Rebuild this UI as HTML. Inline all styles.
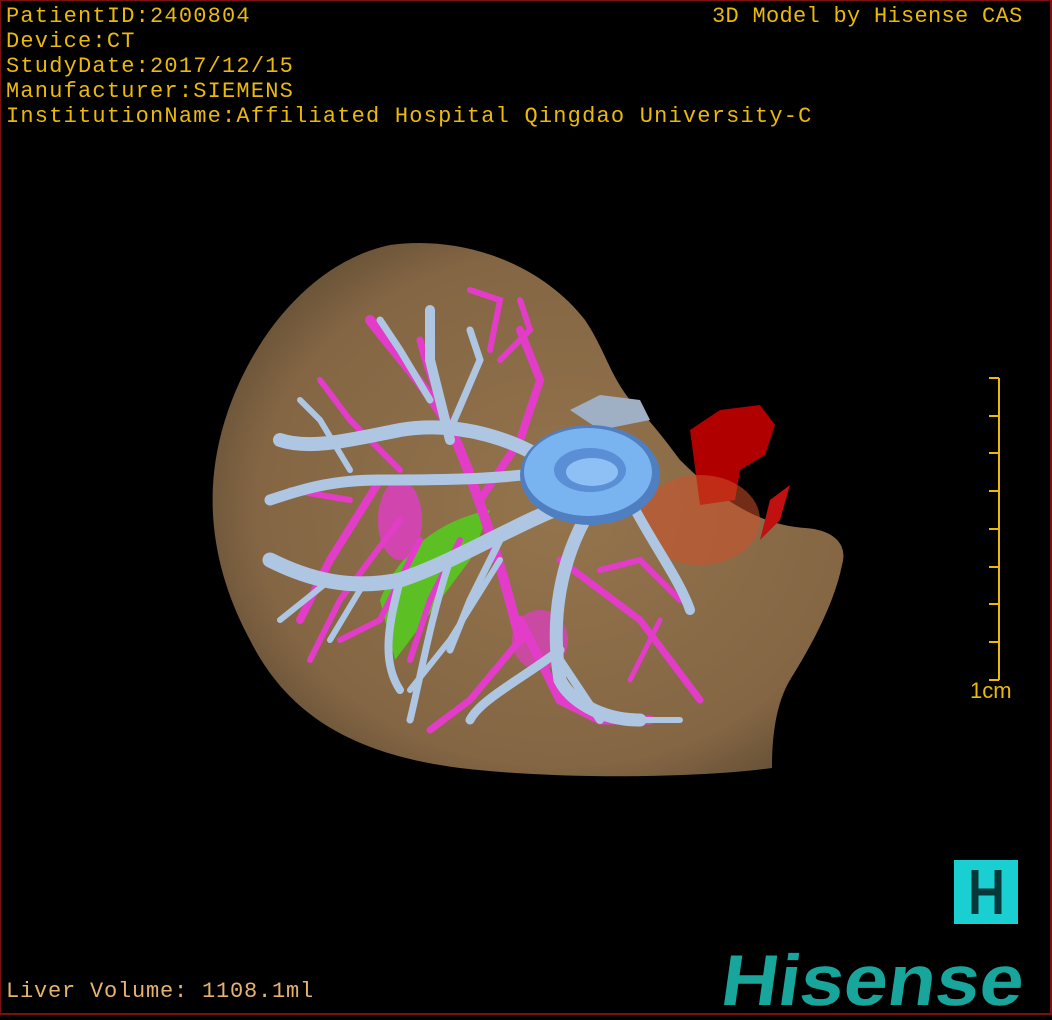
<!DOCTYPE html>
<html><head><meta charset="utf-8">
<style>
html,body{margin:0;padding:0;background:#000;}
#c{position:relative;width:1052px;height:1020px;background:#000;overflow:hidden;}
.b{position:absolute;background:#7a1010;}
.t{position:absolute;font-family:"Liberation Mono",monospace;color:#eab90a;font-size:22px;letter-spacing:1.2px;white-space:nowrap;line-height:25px;}
</style></head><body>
<div id="c">
<div class="b" style="left:0;top:0;width:1052px;height:1px"></div>
<div class="b" style="left:0;top:0;width:1px;height:1014px"></div>
<div class="b" style="left:1050px;top:0;width:2px;height:1014px"></div>
<div class="b" style="left:0;top:1013px;width:1052px;height:2px"></div>

<svg width="1052" height="1020" style="position:absolute;left:0;top:0">
<defs>
<radialGradient id="lg" cx="0.55" cy="0.5" r="0.6">
<stop offset="0" stop-color="#94744c"/><stop offset="0.8" stop-color="#846644"/><stop offset="1" stop-color="#665036"/>
</radialGradient>
</defs>
<path d="M390,245 C460,235 540,262 585,320 C605,350 610,375 630,400 C650,420 665,440 680,460 C720,500 760,525 805,528 C835,530 848,545 842,565 C835,600 815,640 790,680 C775,705 772,740 772,768 C700,778 560,780 460,768 C360,755 290,720 250,640 C215,575 200,500 225,420 C250,340 310,262 390,245 Z" fill="url(#lg)"/>
<path d="M690,430 L720,410 L760,405 L775,425 L765,455 L740,470 L735,500 L700,505 Z" fill="#b00000"/>
<path d="M770,500 L790,485 L780,520 L760,540 Z" fill="#c01010"/>
<ellipse cx="700" cy="520" rx="60" ry="45" fill="#d0502a" opacity="0.55"/>
<path d="M380,600 C400,550 440,520 490,510 L470,560 C440,600 410,640 395,660 Z" fill="#5cc024"/>
<g stroke="#e23cc8" fill="none" stroke-linecap="round">
<path d="M520,640 C500,560 480,500 460,450 C440,400 400,360 370,320" stroke-width="10"/>
<path d="M470,470 C450,430 430,380 420,340" stroke-width="7"/>
<path d="M480,500 L520,440 L540,380 L520,330" stroke-width="8"/>
<path d="M490,350 L500,300 L470,290" stroke-width="6"/>
<path d="M500,360 L530,330 L520,300" stroke-width="6"/>
<path d="M380,480 L330,560 L300,620" stroke-width="8"/>
<path d="M400,470 L350,420 L320,380" stroke-width="6"/>
<path d="M400,520 L340,600 L310,660" stroke-width="6"/>
<path d="M420,540 L380,620 L340,640" stroke-width="6"/>
<path d="M520,620 L560,700 L600,720 L650,720" stroke-width="9"/>
<path d="M560,560 L640,620 L700,700" stroke-width="7"/>
<path d="M600,570 L640,560 L680,600" stroke-width="6"/>
<path d="M520,640 L470,700 L430,730" stroke-width="7"/>
<path d="M460,540 L430,600 L410,660" stroke-width="6"/>
<path d="M660,620 L630,680" stroke-width="5"/>
<path d="M290,490 L350,500" stroke-width="6"/>
</g>
<ellipse cx="400" cy="520" rx="22" ry="40" fill="#e23cc8" opacity="0.8"/>
<ellipse cx="540" cy="640" rx="28" ry="30" fill="#e23cc8" opacity="0.7"/>
<g stroke="#aec6e2" fill="none" stroke-linecap="round">
<path d="M560,470 C520,440 460,420 400,430 C350,440 310,450 280,440" stroke-width="14"/>
<path d="M560,470 C500,480 440,480 380,480 C330,480 300,490 270,500" stroke-width="11"/>
<path d="M580,500 C520,520 460,560 400,580 C350,590 310,580 270,560" stroke-width="15"/>
<path d="M590,510 C560,560 550,620 560,680 C570,700 600,720 640,720" stroke-width="13"/>
<path d="M560,650 C520,680 480,700 470,720" stroke-width="9"/>
<path d="M560,660 L600,720" stroke-width="8"/>
<path d="M630,500 C650,540 680,580 690,610" stroke-width="10"/>
<path d="M450,440 L430,360 L430,310" stroke-width="10"/>
<path d="M430,400 L400,350 L380,320" stroke-width="7"/>
<path d="M450,430 L480,360 L470,330" stroke-width="7"/>
<path d="M400,580 C390,620 380,660 400,690" stroke-width="8"/>
<path d="M450,560 C430,620 420,680 410,720" stroke-width="7"/>
<path d="M500,540 L470,600 L450,650" stroke-width="7"/>
<path d="M350,470 L320,420 L300,400" stroke-width="6"/>
<path d="M330,580 L280,620" stroke-width="6"/>
<path d="M360,590 L330,640" stroke-width="6"/>
<path d="M500,560 L450,640 L410,690" stroke-width="6"/>
<path d="M620,720 L680,720" stroke-width="6"/>
</g>
<path d="M570,410 L600,395 L640,400 L650,420 L600,430 Z" fill="#9fb0c4"/>
<ellipse cx="590" cy="475" rx="70" ry="50" fill="#4f7fc0"/>
<ellipse cx="588" cy="472" rx="64" ry="44" fill="#7ab4f0"/>
<ellipse cx="590" cy="470" rx="36" ry="22" fill="#5a8fd6"/>
<ellipse cx="592" cy="472" rx="26" ry="14" fill="#8ec0f5"/>
<g stroke="#eab90a" stroke-width="2">
<line x1="999" y1="378" x2="999" y2="680"/>
<line x1="989" y1="378" x2="999" y2="378"/>
<line x1="989" y1="416" x2="999" y2="416"/>
<line x1="989" y1="453" x2="999" y2="453"/>
<line x1="989" y1="491" x2="999" y2="491"/>
<line x1="989" y1="529" x2="999" y2="529"/>
<line x1="989" y1="567" x2="999" y2="567"/>
<line x1="989" y1="604" x2="999" y2="604"/>
<line x1="989" y1="642" x2="999" y2="642"/>
<line x1="989" y1="680" x2="999" y2="680"/>
</g>
<rect x="954" y="860" width="64" height="64" fill="#19cfd2"/>
<g stroke="#06383a" stroke-width="7"><line x1="975" y1="870" x2="975" y2="914"/><line x1="998" y1="870" x2="998" y2="914"/><line x1="975" y1="892" x2="998" y2="892"/></g>
<text x="720" y="1005" font-family="Liberation Sans,sans-serif" font-weight="bold" font-size="72" fill="#18a59c" textLength="302" lengthAdjust="spacingAndGlyphs" transform="skewX(-8) translate(140,0)">Hisense</text>
</svg>

<div class="t" style="left:6px;top:4px">PatientID:2400804<br>Device:CT<br>StudyDate:2017/12/15<br>Manufacturer:SIEMENS<br>InstitutionName:Affiliated Hospital Qingdao University-C</div>
<div class="t" style="left:712px;top:4px;letter-spacing:0.3px">3D Model by Hisense CAS</div>
<div class="t" style="left:970px;top:678px;font-family:'Liberation Sans',sans-serif;letter-spacing:0">1cm</div>
<div class="t" style="left:6px;top:979px;color:#e6b36e;letter-spacing:0.8px">Liver Volume: 1108.1ml</div>
</div>
</body></html>
